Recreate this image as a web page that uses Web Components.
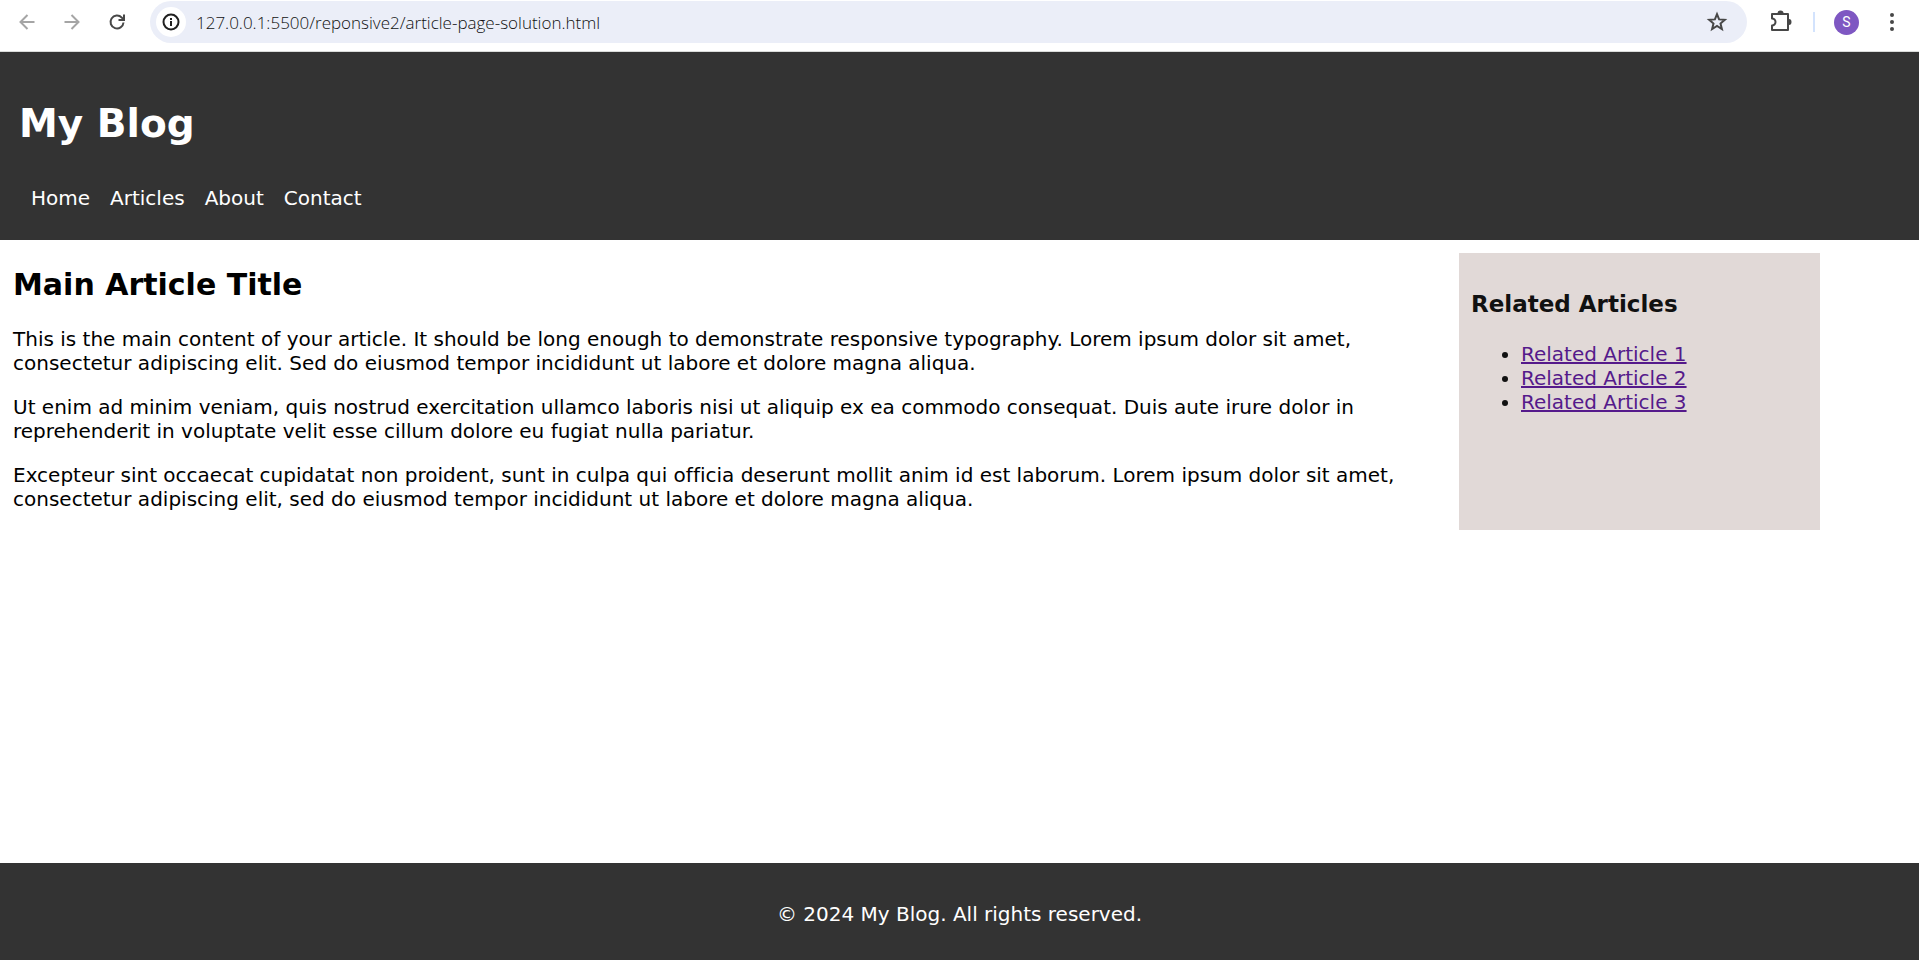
<!DOCTYPE html>
<html lang="en">
<head>
<meta charset="utf-8">
<meta name="viewport" content="width=device-width, initial-scale=1">
<title>My Blog</title>
<style>
  body { margin: 0; background: #fff; color: #000; font: 20px/24px Verdana, "DejaVu Sans", sans-serif; font-variant-ligatures: none; }
</style>
</head>
<body>
<blog-window>
  <browser-bar slot="bar" value="127.0.0.1:5500/reponsive2/article-page-solution.html"></browser-bar>
  <blog-header slot="header" heading="My Blog">
    <blog-link href="#home">Home</blog-link>
    <blog-link href="#articles">Articles</blog-link>
    <blog-link href="#about">About</blog-link>
    <blog-link href="#contact">Contact</blog-link>
  </blog-header>
  <blog-article heading="Main Article Title">
    <p>This is the main content of your article. It should be long enough to demonstrate responsive typography. Lorem ipsum dolor sit amet, consectetur adipiscing elit. Sed do eiusmod tempor incididunt ut labore et dolore magna aliqua.</p>
    <p>Ut enim ad minim veniam, quis nostrud exercitation ullamco laboris nisi ut aliquip ex ea commodo consequat. Duis aute irure dolor in reprehenderit in voluptate velit esse cillum dolore eu fugiat nulla pariatur.</p>
    <p>Excepteur sint occaecat cupidatat non proident, sunt in culpa qui officia deserunt mollit anim id est laborum. Lorem ipsum dolor sit amet, consectetur adipiscing elit, sed do eiusmod tempor incididunt ut labore et dolore magna aliqua.</p>
  </blog-article>
  <related-articles></related-articles>
  <blog-footer slot="footer">© 2024 My Blog. All rights reserved.</blog-footer>
</blog-window>
<script>
const define = (name, html, setup) => customElements.define(name, class extends HTMLElement {
  constructor() {
    super();
    this.attachShadow({ mode: 'open' }).innerHTML = html;
  }
  connectedCallback() { if (setup) setup(this, this.shadowRoot); }
});

define('blog-window', `
<style>
  :host { display: flex; flex-direction: column; min-height: 100vh; }
  main { flex: 1; display: grid; grid-template-columns: minmax(0, 1fr) 361px; align-items: start; padding: 13px 99px 13px 0; }
  @media (max-width: 900px) { main { grid-template-columns: 1fr; padding-right: 0; } }
</style>
<slot name="bar"></slot><slot name="header"></slot>
<main><slot></slot></main>
<slot name="footer"></slot>`);

define('browser-bar', `
<style>
  :host { display: flex; align-items: center; height: 42px; padding: 1px 12px 8px 12px; border-bottom: 1px solid #dadcda; background: #fff; color: #474747; }
  button { display: grid; place-items: center; flex: none; width: 30px; height: 30px; padding: 0; border: 0; border-radius: 50%; background: none; color: inherit; }
  svg { display: block; fill: none; stroke: currentColor; stroke-width: 2; }
  .nav { display: flex; gap: 15px; margin-right: 18px; }
  .nav button:disabled { color: #a5a5a5; }
  form { flex: 1; min-width: 0; height: 42px; box-sizing: border-box; display: flex; align-items: center; gap: 10px; padding: 0 15px 0 6px; border-radius: 21px; background: #ebeef8; }
  .info { background: #fff; color: #202020; }
  input { flex: 1; min-width: 0; padding: 1px 0 0; border: 0; outline: 0; background: none; color: #111; font: 300 17px/24px "Segoe UI", "Open Sans", sans-serif; }
  .tools { display: flex; align-items: center; margin-left: 19px; }
  .line { width: 2px; height: 20px; margin: 0 19px 0 17px; background: #d3e3fd; }
  .avatar { width: 25px; height: 25px; margin-right: 18px; background: #7e57c2; color: #fff; font: 14px/24px Roboto, sans-serif; }
</style>
<div class="nav">
  <button type="button" disabled aria-label="Back"><svg width="20" height="20" viewBox="0 0 20 20"><path d="M17.500 10H4M10.500 3L3.500 10L10.500 17"/></svg></button>
  <button type="button" disabled aria-label="Forward"><svg width="20" height="20" viewBox="0 0 20 20"><path d="M2.500 10H16M9.500 3L16.500 10L9.500 17"/></svg></button>
  <button type="button" aria-label="Reload"><svg width="20" height="20" viewBox="0 0 20 20"><path d="M16.500 10.500A6.500 6.500 0 1 1 14.800 5.600L16.500 7.500M17 2.500V8H11.500"/></svg></button>
</div>
<form>
  <button class="info" type="button" aria-label="View site information"><svg width="18" height="18" viewBox="0 0 18 18"><circle cx="9" cy="9" r="7.500"/><path d="M9 8V13M9 5V7"/></svg></button>
  <input type="text" aria-label="Address" spellcheck="false">
  <button type="button" aria-label="Bookmark this page"><svg width="22" height="22" viewBox="0 0 22 22"><path d="M11 3.200L13.100 8.400L18.800 8.800L14.500 12.500L15.900 18L11 15L6.100 18L7.500 12.500L3.200 8.800L8.900 8.400Z"/></svg></button>
</form>
<div class="tools">
  <button type="button" aria-label="Extensions"><svg width="24" height="24" viewBox="0 0 24 24"><path d="M4 4H19V20H3V15.500A3.500 3.500 0 0 0 3 8.500V4Z" stroke-linejoin="round"/><path d="M8.500 3A3 2.500 0 0 1 14.500 3ZM20 9A2.500 3 0 0 1 20 15Z" fill="currentColor" stroke="none"/></svg></button>
  <span class="line"></span>
  <button class="avatar" type="button" aria-label="Profile">S</button>
  <button type="button" aria-label="Menu"><svg width="20" height="20" viewBox="0 0 20 20"><g fill="currentColor" stroke="none"><circle cx="10" cy="3" r="2"/><circle cx="10" cy="10" r="2"/><circle cx="10" cy="17" r="2"/></g></svg></button>
</div>`, (el, root) => { root.querySelector('input').value = el.getAttribute('value'); });

define('blog-header', `
<style>
  :host { display: block; padding: 20px 19px 30px; background: #333; color: #fff; }
  h1 { margin: 0; padding: 28px 0; font-size: 39px; line-height: 48px; }
  nav { display: flex; flex-wrap: wrap; gap: 20px; padding: 10px 12px 0; }
</style>
<h1></h1><nav><slot></slot></nav>`, (el, root) => { root.querySelector('h1').textContent = el.getAttribute('heading'); });

define('blog-link', `
<style>
  :host { display: block; }
  a { color: inherit; text-decoration: none; }
</style>
<a><slot></slot></a>`, (el, root) => { root.querySelector('a').href = el.getAttribute('href'); });

define('blog-article', `
<style>
  :host { display: block; padding: 0 40px 0 13px; }
  h2 { margin: 14px 0 24px; font-size: 30px; line-height: 36px; }
  ::slotted(p) { margin: 0 0 20px; }
</style>
<article><h2></h2><slot></slot></article>`, (el, root) => { root.querySelector('h2').textContent = el.getAttribute('heading'); });

define('related-articles', `
<style>
  :host { display: block; box-sizing: border-box; min-height: 277px; padding: 37px 12px; background: #e1d9d7; color: #111; }
  h3 { margin: 0 0 24px; font-size: 23px; line-height: 28px; }
  ul { margin: 0; padding-left: 50px; }
  a { color: #551a8b; }
</style>
<aside>
  <h3>Related Articles</h3>
  <ul>
    <li><a href="#related-1">Related Article 1</a></li>
    <li><a href="#related-2">Related Article 2</a></li>
    <li><a href="#related-3">Related Article 3</a></li>
  </ul>
</aside>`);

define('blog-footer', `
<style>
  :host { display: block; padding: 39px 13px 34px; background: #333; color: #fff; text-align: center; }
</style>
<footer><slot></slot></footer>`);
</script>
</body>
</html>
